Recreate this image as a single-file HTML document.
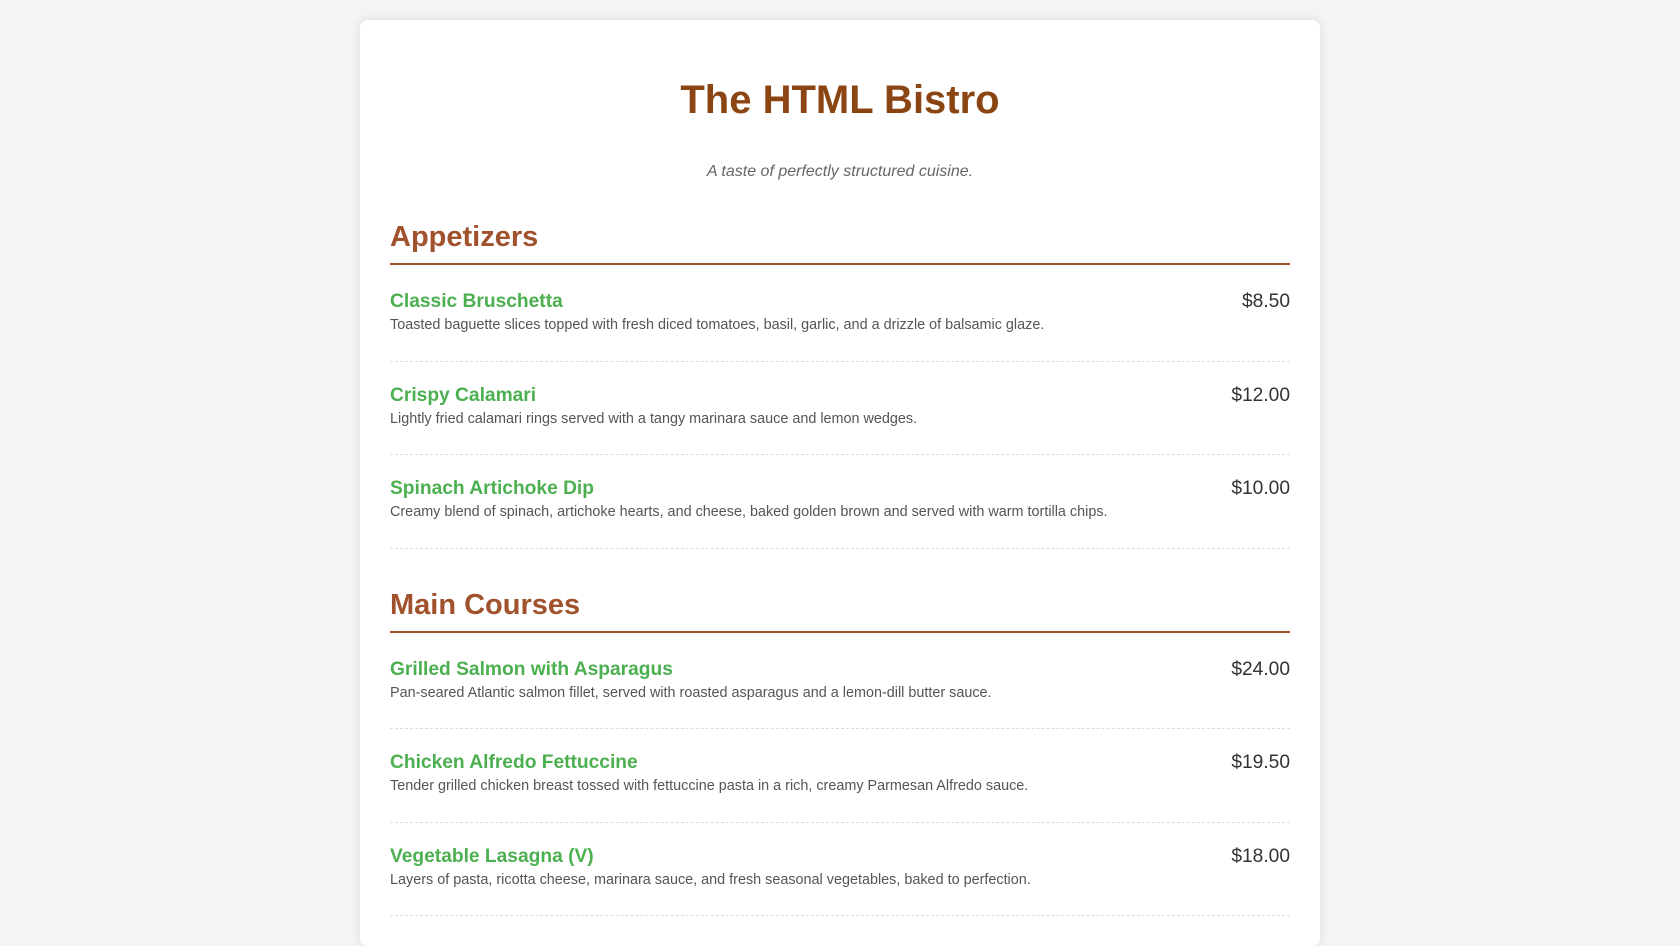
<!DOCTYPE html>
<html><head><meta charset="utf-8"><style>
*{box-sizing:border-box}
body{margin:0;background:#f4f4f4;font-family:"Liberation Sans",Arial,sans-serif;color:#333;height:876px;overflow:hidden}
.card{width:960px;margin:20px auto 0;background:#fff;padding:0 30px 30px;border-radius:8px;box-shadow:0 0 10px rgba(0,0,0,0.1)}
h1{margin:0;padding-top:57px;font-size:40px;line-height:46px;color:#8B4513;text-align:center}
.sub{text-align:center;font-style:italic;color:#666;font-size:16px;line-height:20px;margin:39px 0 0}
h2{font-size:29px;line-height:34px;color:#A0522D;margin:38px 0 3px;padding-bottom:9px;border-bottom:2px solid #A0522D}
h2.m{margin-top:39px}
.item{padding:23px 0 24.5px;border-bottom:1px dashed #ddd}
.row{display:flex;justify-content:space-between;font-size:19.2px;line-height:22px}
.name{font-weight:bold;color:#4CAF50}
.price{color:#333}
.desc{font-size:14.4px;line-height:22px;color:#555;margin-top:1px}
</style></head><body>
<div class="card">
<h1>The HTML Bistro</h1>
<p class="sub">A taste of perfectly structured cuisine.</p>
<h2>Appetizers</h2>
<div class="item"><div class="row"><span class="name">Classic Bruschetta</span><span class="price">$8.50</span></div><div class="desc">Toasted baguette slices topped with fresh diced tomatoes, basil, garlic, and a drizzle of balsamic glaze.</div></div>
<div class="item"><div class="row"><span class="name">Crispy Calamari</span><span class="price">$12.00</span></div><div class="desc">Lightly fried calamari rings served with a tangy marinara sauce and lemon wedges.</div></div>
<div class="item"><div class="row"><span class="name">Spinach Artichoke Dip</span><span class="price">$10.00</span></div><div class="desc">Creamy blend of spinach, artichoke hearts, and cheese, baked golden brown and served with warm tortilla chips.</div></div>
<h2 class="m">Main Courses</h2>
<div class="item"><div class="row"><span class="name">Grilled Salmon with Asparagus</span><span class="price">$24.00</span></div><div class="desc">Pan-seared Atlantic salmon fillet, served with roasted asparagus and a lemon-dill butter sauce.</div></div>
<div class="item"><div class="row"><span class="name">Chicken Alfredo Fettuccine</span><span class="price">$19.50</span></div><div class="desc">Tender grilled chicken breast tossed with fettuccine pasta in a rich, creamy Parmesan Alfredo sauce.</div></div>
<div class="item"><div class="row"><span class="name">Vegetable Lasagna (V)</span><span class="price">$18.00</span></div><div class="desc">Layers of pasta, ricotta cheese, marinara sauce, and fresh seasonal vegetables, baked to perfection.</div></div>
</div>
</body></html>
